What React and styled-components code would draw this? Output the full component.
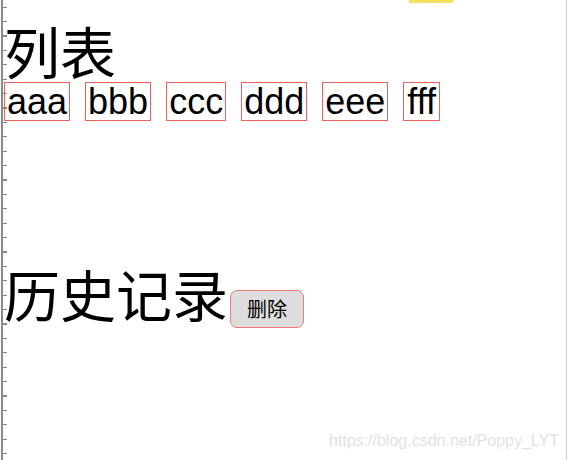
import React from "react";
import styled, { createGlobalStyle } from "styled-components";

const GlobalStyle = createGlobalStyle`
  html, body {
    margin: 0;
    padding: 0;
    background: #ffffff;
  }
  body {
    font-family: "Liberation Sans", "Noto Sans CJK SC", sans-serif;
    color: #000000;
  }
`;

const items = ["aaa", "bbb", "ccc", "ddd", "eee", "fff"];

const App = () => {
  return (
    <Page>
      <GlobalStyle />
      <Content>
        <TopStrip>
          <Marker />
        </TopStrip>
        <Title>列表</Title>
        <List>
          {items.map((item) => (
            <Item key={item} wide={item === "fff"}>
              {item}
            </Item>
          ))}
        </List>
        <HistoryRow>
          <Title $flat>历史记录</Title>
          <DeleteButton>删除</DeleteButton>
        </HistoryRow>
      </Content>
      <Watermark>https://blog.csdn.net/Poppy_LYT</Watermark>
    </Page>
  );
};

export default App;

const Page = styled.div`
  position: relative;
  display: flex;
  width: 568px;
  height: 460px;
  box-sizing: border-box;
  padding-left: 4px;
  padding-right: 1px;
  overflow: hidden;
  background-image: linear-gradient(#8a8a8a, #8a8a8a),
    repeating-linear-gradient(
      to bottom,
      transparent 0,
      transparent 6.5px,
      #8a8a8a 6.5px,
      #8a8a8a 7.7px,
      transparent 7.7px,
      transparent 14.4px
    );
  background-size: 2px 100%, 6px 100%;
  background-position: 1px 0, 1px 0;
  background-repeat: no-repeat;
`;

const Content = styled.div`
  flex: 1;
  display: flex;
  flex-direction: column;
  border-right: 1px solid #cccccc;
`;

const TopStrip = styled.div`
  height: 3px;
  display: flex;
`;

const Marker = styled.div`
  width: 44px;
  height: 3px;
  margin-left: 405px;
  background: #f6e05e;
`;

const Title = styled.h1`
  margin: 0;
  margin-top: ${(p) => (p.$flat ? "0" : "15px")};
  font-family: "Noto Sans CJK SC", "Liberation Sans", sans-serif;
  font-size: 56px;
  font-weight: normal;
  line-height: 64px;
`;

const List = styled.div`
  display: flex;
  gap: 15px;
`;

const Item = styled.span.withConfig({ shouldForwardProp: (p) => p !== "wide" })`
  display: inline-block;
  border: 1px solid #f0605a;
  font-size: 36px;
  line-height: 37px;
  height: 37px;
  padding: 0 ${(p) => (p.wide ? "3px" : "2px")};
`;

const HistoryRow = styled.div`
  display: flex;
  align-items: baseline;
  margin-top: 140px;
`;

const DeleteButton = styled.button`
  width: 74px;
  height: 38px;
  margin-left: 2px;
  padding: 0;
  background: #dddddd;
  border: 1px solid #ee7a72;
  border-radius: 7px;
  font-family: "Noto Sans CJK SC", sans-serif;
  font-size: 20px;
  color: #000000;
`;

const Watermark = styled.div`
  position: absolute;
  right: 9px;
  bottom: 10px;
  font-family: "Liberation Sans", sans-serif;
  font-size: 16px;
  color: #e2e2e2;
`;
